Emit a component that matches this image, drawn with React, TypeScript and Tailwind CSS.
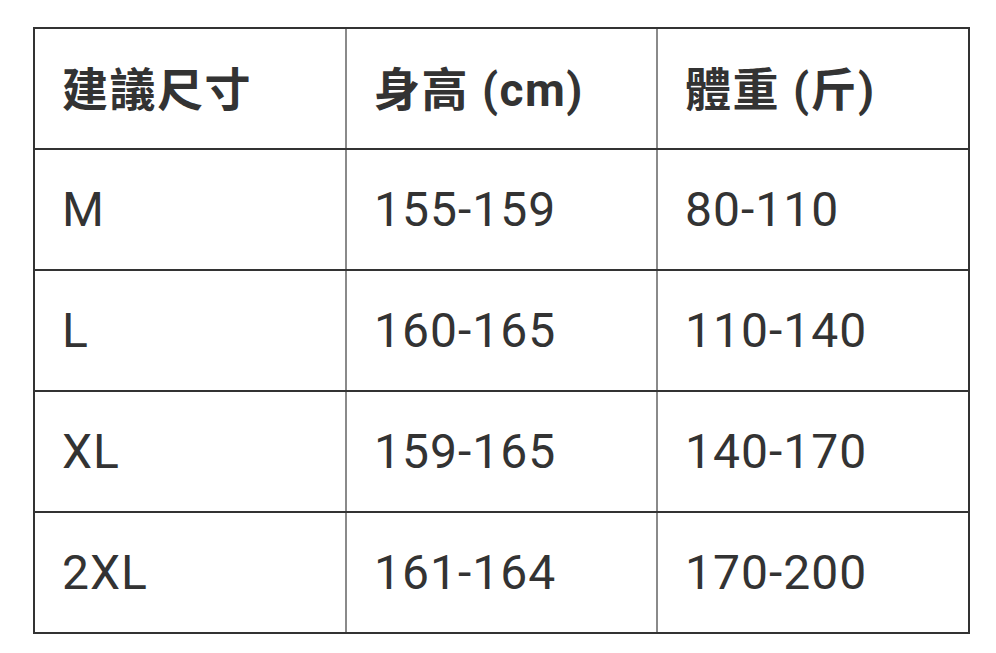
import React from 'react';

const header = ['建議尺寸', '身高 (cm)', '體重 (斤)'];

const rows = [
  ['M', '155-159', '80-110'],
  ['L', '160-165', '110-140'],
  ['XL', '159-165', '140-170'],
  ['2XL', '161-164', '170-200'],
];

const widths = ['w-[310px]', 'w-[311px] border-l-2 border-[#8a8a8a]', 'w-[312px] border-l-2 border-[#8a8a8a]'];

export default function App() {
  return (
    <div className="w-[996px] h-[653px] bg-white pt-[27px] pl-[33px] font-['Roboto','Noto_Sans_CJK_TC',sans-serif] text-[#333333]">
      <div className="w-[937px] border-t-2 border-x-2 border-[#333333]">
        {/* Header */}
        <div className="flex h-[121px] border-b-2 border-[#333333]">
          {header.map((h, i) => (
            <div
              key={h}
              className={`flex items-center pl-[27px] pt-[4px] text-[46px] font-bold tracking-[1.5px] ${widths[i]}`}
            >
              {h}
            </div>
          ))}
        </div>

        {rows.map((r) => (
          <div key={r[0]} className="flex h-[121px] border-b-2 border-[#333333]">
            {r.map((c, i) => (
              <div
                key={i}
                className={`flex items-center pl-[27px] text-[48px] tracking-[1px] ${widths[i]}`}
              >
                {c}
              </div>
            ))}
          </div>
        ))}
      </div>
    </div>
  );
}
